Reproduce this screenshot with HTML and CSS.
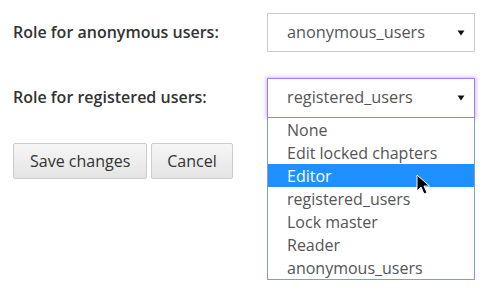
FILE: index.html
```html
<!DOCTYPE html>
<html>
<head>
<meta charset="utf-8">
<link rel="stylesheet" href="styles.css">
</head>
<body>
<form class="form">
  <div class="row">
    <label class="label">Role for anonymous users:</label>
    <div class="select">
      <span>anonymous_users</span>
      <svg class="caret" width="8" height="6" viewBox="0 0 8 6"><path d="M0.5 0.5h7L4 5.5z" fill="#111"/></svg>
    </div>
  </div>
  <div class="row row2">
    <label class="label">Role for registered users:</label>
    <div class="select-wrap">
      <div class="select focused">
        <span>registered_users</span>
        <svg class="caret" width="8" height="6" viewBox="0 0 8 6"><path d="M0.5 0.5h7L4 5.5z" fill="#111"/></svg>
      </div>
      <ul class="dropdown">
        <li>None</li>
        <li>Edit locked chapters</li>
        <li class="hl">Editor</li>
        <li>registered_users</li>
        <li>Lock master</li>
        <li>Reader</li>
        <li>anonymous_users</li>
      </ul>
      <svg class="cursor" width="14" height="22" viewBox="0 0 14 22"><path d="M1 1v16l4-4 3 7 3-1.3-3-6.7h5.5z" fill="#000" stroke="#fff" stroke-width="1"/></svg>
    </div>
  </div>
  <div class="buttons">
    <button type="button" class="btn btn-save">Save changes</button>
    <button type="button" class="btn btn-cancel">Cancel</button>
  </div>
</form>
</body>
</html>
```
FILE: styles.css
```css
html, body { margin: 0; padding: 0; background: #fff; }
body { font-family: "Open Sans", sans-serif; width: 504px; height: 304px; overflow: hidden; }
.form { padding: 13px 0 0 13px; }
.row { display: grid; grid-template-columns: 254px 208px; align-items: center; }
.row2 { margin-top: 26px; }
.label { font-weight: 600; font-size: 16px; color: #333; position: relative; top: -1px; }
.select {
  box-sizing: border-box; height: 39px; border: 1px solid #ccc; background: #fff;
  display: flex; align-items: center; justify-content: space-between;
  padding: 0 9px 0 19px; font-size: 16.3px; color: #555;
}
.select span { position: relative; top: -1px; }
.select.focused { height: 40px; border-color: #a27cf4; box-shadow: 0 0 4px 1px rgba(170,130,250,0.55); }
.caret { display: block; }
.select-wrap { position: relative; }
.dropdown {
  position: absolute; left: 0; top: 40px; width: 208px; box-sizing: border-box;
  margin: 0; padding: 0; list-style: none; border: 1px solid #7f9bd8; border-top: none; background: #fff;
  font-size: 16px; color: #555; z-index: 2;
}
.dropdown li { height: 23px; line-height: 24px; padding-left: 19px; }
.dropdown li.hl { background: #1e90ff; color: #fff; }
.cursor { position: absolute; left: 149px; top: 96px; z-index: 3; }
.buttons { display: flex; gap: 4px; margin-top: 25px; }
.btn {
  font-family: "Open Sans", sans-serif; font-size: 16px; color: #333;
  height: 36px; padding: 0 16px; border: 1px solid #ccc; border-radius: 2px;
  background: linear-gradient(#f6f6f6, #e4e4e4);
}
.btn-save { padding: 0 16px; }
.btn-cancel { padding: 0 15px; }
```
